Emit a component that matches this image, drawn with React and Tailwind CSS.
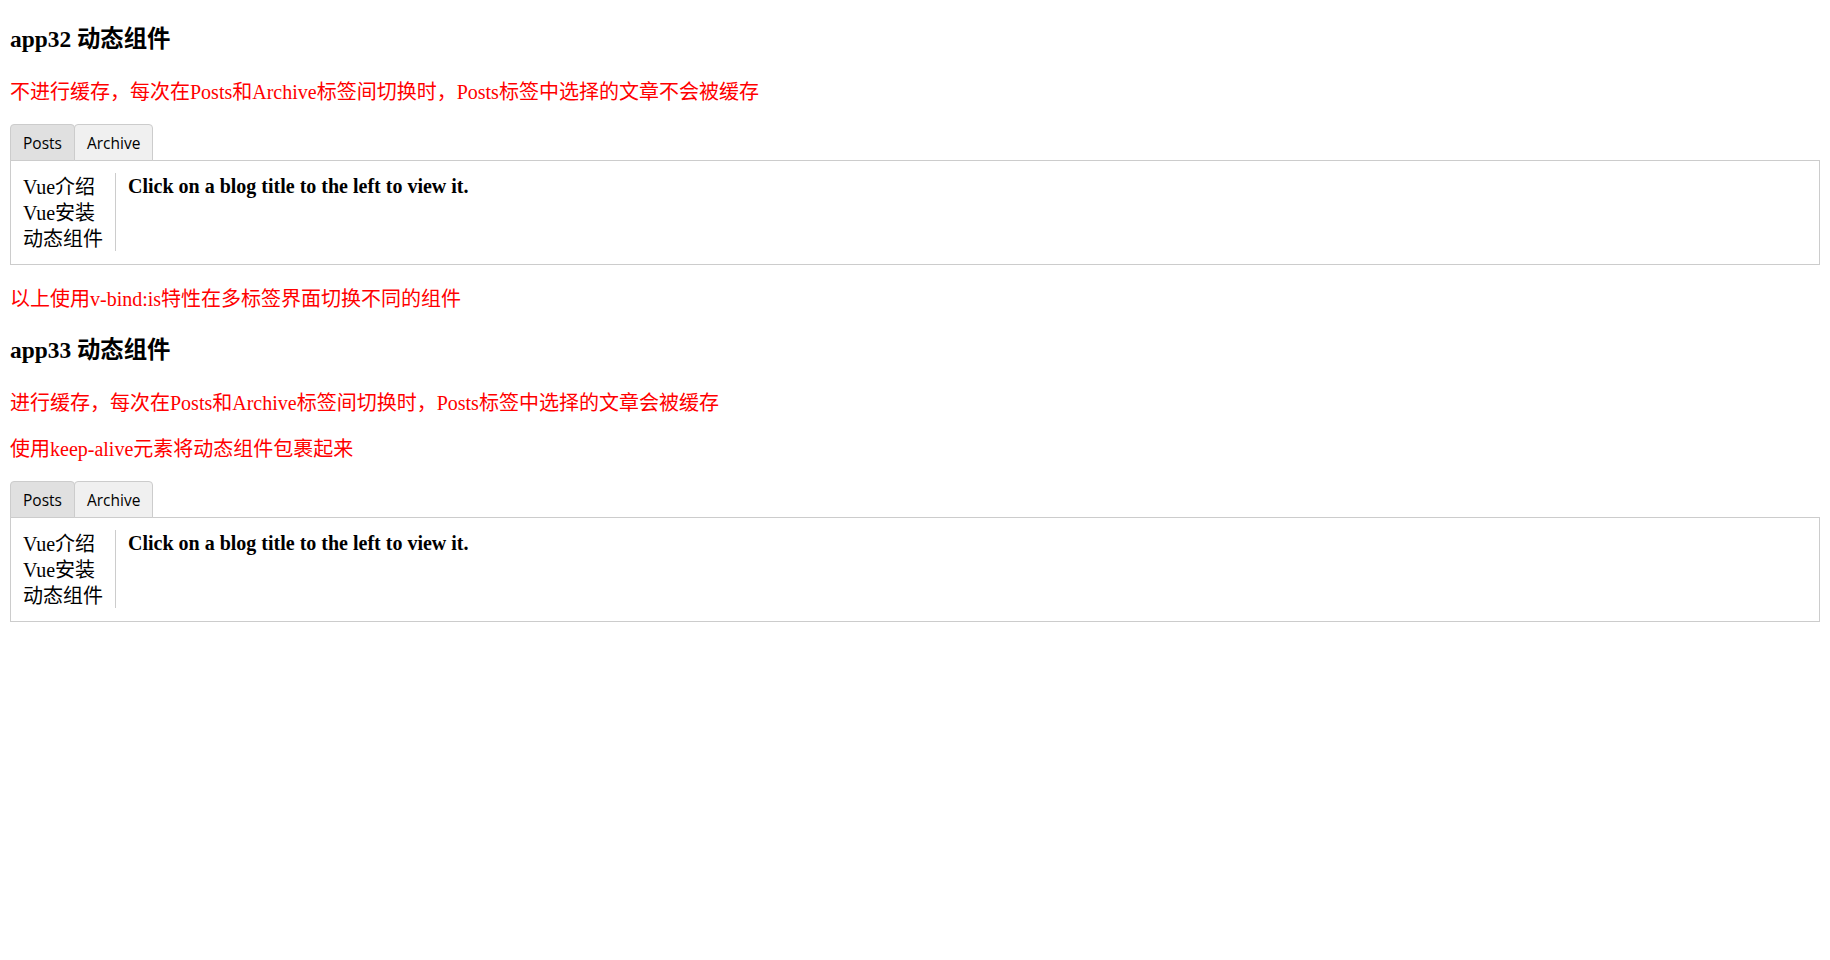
import { useState } from 'react';

const posts = [
  { id: 1, title: 'Vue介绍', content: 'Vue 是一套用于构建用户界面的渐进式框架。' },
  { id: 2, title: 'Vue安装', content: '可以通过 CDN、npm 或 Vue CLI 安装 Vue。' },
  { id: 3, title: '动态组件', content: '使用 component 元素和 is 特性切换组件。' },
];

const tabs = ['Posts', 'Archive'];

const PostsTab = ({ selected, onSelect }) => {
  const post = posts.find((p) => p.id === selected);
  return (
    <div className="flex">
      <ul className="max-w-[40vw] pr-[12px] border-r border-[#ccc]">
        {posts.map((p) => (
          <li
            key={p.id}
            onClick={() => onSelect(p.id)}
            className={`whitespace-nowrap overflow-hidden text-ellipsis cursor-pointer pt-[3px] leading-[23px] ${
              p.id === selected ? 'bg-[#dddddd]' : ''
            }`}
          >
            {p.title}
          </li>
        ))}
      </ul>
      <div className="pl-[12px]">
        {post ? (
          <div>
            <h3 className="font-bold text-[20px] leading-[26px]">{post.title}</h3>
            <div className="leading-[26px]">{post.content}</div>
          </div>
        ) : (
          <h3 className="font-bold text-[20px] leading-[26px]">Click on a blog title to the left to view it.</h3>
        )}
      </div>
    </div>
  );
};

const ArchiveTab = () => <div className="leading-[26px]">Archive component</div>;

// keepAlive: whether the selected post survives a tab switch
const DynamicTabs = ({ keepAlive }) => {
  const [current, setCurrent] = useState('Posts');
  const [selected, setSelected] = useState(null);

  const switchTab = (tab) => {
    if (!keepAlive) setSelected(null);
    setCurrent(tab);
  };

  return (
    <div>
      <div className="flex">
        {tabs.map((tab) => (
          <button
            key={tab}
            onClick={() => switchTab(tab)}
            className={`h-[37px] px-[12px] pt-[2px] -mb-px -mr-px flex items-center border border-[#ccc] rounded-t-[4px] cursor-pointer text-black text-[15.5px] font-['Open_Sans',sans-serif] hover:bg-[#e0e0e0] ${
              current === tab ? 'bg-[#e0e0e0]' : 'bg-[#f0f0f0]'
            }`}
          >
            {tab}
          </button>
        ))}
      </div>
      <div className="border border-[#ccc] pt-[12px] pb-[13px] px-[12px]">
        {current === 'Posts' ? <PostsTab selected={selected} onSelect={setSelected} /> : <ArchiveTab />}
      </div>
    </div>
  );
};

const App = () => {
  return (
    <div className="min-h-screen bg-white text-black px-[10px] pt-[25px] text-[20px] font-['Liberation_Serif','Noto_Sans_CJK_SC',serif]">
      <h3 className="font-bold text-[23.4px] pt-[1px] leading-[27px]">app32 动态组件</h3>
      <p className="text-[#ff0000] pt-[3px] leading-[23px] mt-[25px]">
        不进行缓存，每次在Posts和Archive标签间切换时，Posts标签中选择的文章不会被缓存
      </p>
      <div className="mt-[20px]">
        <DynamicTabs keepAlive={false} />
      </div>
      <p className="text-[#ff0000] pt-[3px] leading-[23px] mt-[20px]">以上使用v-bind:is特性在多标签界面切换不同的组件</p>

      <h3 className="font-bold text-[23.4px] pt-[1px] leading-[27px] mt-[25px]">app33 动态组件</h3>
      <p className="text-[#ff0000] pt-[3px] leading-[23px] mt-[25px]">
        进行缓存，每次在Posts和Archive标签间切换时，Posts标签中选择的文章会被缓存
      </p>
      <p className="text-[#ff0000] pt-[3px] leading-[23px] mt-[20px]">使用keep-alive元素将动态组件包裹起来</p>
      <div className="mt-[20px]">
        <DynamicTabs keepAlive={true} />
      </div>
    </div>
  );
};

export default App;
